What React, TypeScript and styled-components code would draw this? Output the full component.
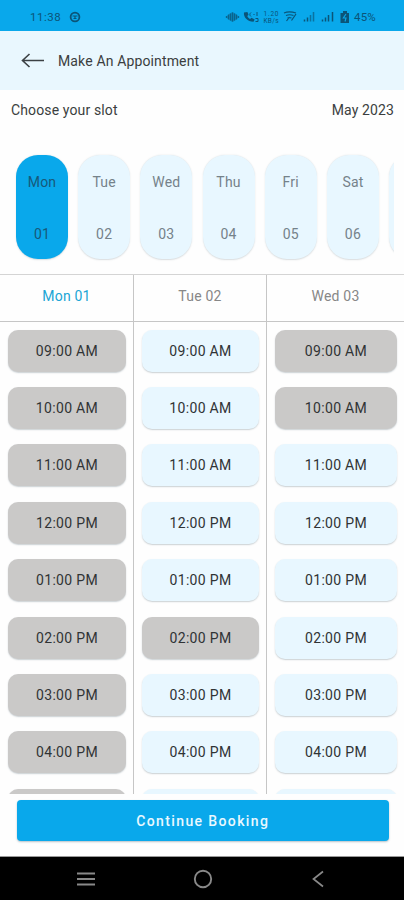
import React from 'react';
import styled, { createGlobalStyle } from 'styled-components';

const GlobalStyle = createGlobalStyle`
  * { box-sizing: border-box; }
  body { margin: 0; background: #fff; }
  button { font: inherit; border: 0; padding: 0; background: none; }
`;

const Screen = styled.main`
  width: 404px;
  height: 900px;
  display: flex;
  flex-direction: column;
  overflow: hidden;
  background: #fefefe;
  color: #3b3e40;
  font-family: Roboto, sans-serif;
  font-size: 14px;
`;

const StatusBar = styled.div`
  flex: 0 0 31px;
  display: flex;
  justify-content: space-between;
  align-items: center;
  padding: 2px 26px 0 30px;
  background: #09a8eb;
  color: #0b5478;
  font-size: 11.5px;
`;

const StatusGroup = styled.div`
  display: flex;
  align-items: center;
`;

const Clock = styled.span`
  width: 39px;
  letter-spacing: 0.5px;
`;

const Percent = styled.span`
  width: 24px;
  margin-left: 3px;
  letter-spacing: 0.2px;
  white-space: nowrap;
`;

const Header = styled.header`
  flex: 0 0 59px;
  display: flex;
  align-items: center;
  padding: 1px 0 0 20px;
  gap: 13px;
  background: #e9f7fe;
`;

const BackButton = styled.button`
  display: flex;
  width: 25px;
`;

const Title = styled.h1`
  margin: 0;
  font-size: 14px;
  font-weight: 400;
  letter-spacing: 0.14px;
`;

const MonthRow = styled.div`
  flex: 0 0 40px;
  display: flex;
  justify-content: space-between;
  align-items: center;
  padding: 0 10px 0 11px;
  letter-spacing: 0.13px;
`;

const DayStrip = styled.div`
  flex: 0 0 144px;
  display: flex;
  gap: 10.2px;
  padding: 25px 0 0 16px;
  margin-right: 10px;
  overflow: hidden;
`;

const DayPill = styled.button<{ $active: boolean }>`
  flex: 0 0 52px;
  height: 104px;
  display: flex;
  flex-direction: column;
  justify-content: space-between;
  align-items: center;
  padding: 18px 0 16px;
  border-radius: 22px;
  background: ${(p) => (p.$active ? '#09a8eb' : '#e8f7ff')};
  color: ${(p) => (p.$active ? '#17597a' : '#75828a')};
  box-shadow: 0 0.5px 1.5px rgba(80, 100, 110, 0.22);
  line-height: 18px;
  letter-spacing: 0.2px;
`;

const Schedule = styled.section`
  flex: 0 0 520px;
  display: grid;
  grid-template-columns: 134px 133px 137px;
  border-top: 1px solid #d4d4d4;
  overflow: hidden;
`;

const DayColumn = styled.div`
  border-right: 1px solid #c6c6c6;
  &:last-child { border-right: 0; }
`;

const ColumnHeading = styled.h2<{ $active: boolean }>`
  height: 47px;
  margin: 0;
  padding-top: 12px;
  border-bottom: 1px solid #c6c6c6;
  color: ${(p) => (p.$active ? '#20a5d5' : '#878787')};
  font-size: 14px;
  font-weight: 400;
  line-height: 18px;
  letter-spacing: 0.2px;
  text-align: center;
`;

const SlotList = styled.div`
  display: flex;
  flex-direction: column;
  gap: 15.4px;
  padding: 7.6px 7px 0 8px;
`;

const Slot = styled.button<{ $taken: boolean }>`
  height: 42px;
  flex: none;
  border-radius: 10px;
  background: ${(p) => (p.$taken ? '#cac9c8' : '#e8f7ff')};
  color: #303335;
  box-shadow: 0 1px 1.5px rgba(70, 90, 100, 0.28);
  letter-spacing: 0.32px;
`;

const Footer = styled.footer`
  flex: 0 0 63px;
  padding: 6px 15.5px 0 17px;
  border-bottom: 1px solid #999;
`;

const ContinueButton = styled.button`
  width: 100%;
  height: 41px;
  border-radius: 4px;
  background: #09a8eb;
  color: #e9f8ff;
  box-shadow: 0 1px 2px rgba(50, 80, 100, 0.35);
  font-size: 14px;
  font-weight: 500;
  letter-spacing: 1.38px;
`;

const NavBar = styled.nav`
  flex: 1;
  display: grid;
  grid-template-columns: 86px 117px 115px;
  align-items: center;
  background: #000;
  svg { justify-self: end; margin-right: -11px; }
`;

const days = ['Mon', 'Tue', 'Wed', 'Thu', 'Fri', 'Sat', 'Sun'];
const times = ['09:00 AM', '10:00 AM', '11:00 AM', '12:00 PM', '01:00 PM', '02:00 PM', '03:00 PM', '04:00 PM', '05:00 PM'];
const columns = [
  { name: 'Mon 01', taken: times },
  { name: 'Tue 02', taken: ['02:00 PM'] },
  { name: 'Wed 03', taken: ['09:00 AM', '10:00 AM'] },
];

const BadgeIcon = () => (
  <svg width="12" height="12" viewBox="0 0 12 12" fill="none" stroke="currentColor">
    <circle cx="6" cy="6" r="4.4" strokeWidth="1.8" />
    <path d="M3.5 5h5M4.5 7.5h3M6 5v3" strokeWidth="1.2" />
  </svg>
);

const StatusIcons = () => (
  <svg width="126" height="16" viewBox="0 0 126 16" fill="none" stroke="currentColor">
    <path d="M.5 8 5 4.5 7.5 3l2.5 1.5L14.5 8 10 11.5 7.5 13 5 11.5z" fill="currentColor" stroke="none" opacity=".4" />
    <path d="M1.5 7v2M3.5 5.5v5M5.5 4.5v7M7.5 3.5v9M9.5 4.5v7M11.5 5.5v5M13.5 7v2" strokeWidth="1.2" opacity=".7" />
    <path d="M19 3.5c-.8 4.5 3.5 9.3 9.5 9.3l1.2-2.4-3.2-1.6-1.4 1.2c-1.3-.7-2.3-1.8-2.8-3.1l1.2-1.2-1.1-2.7z" fill="currentColor" stroke="none" />
    <path d="M26 3.5c-1.5 1-1.5 3 0 4M28.5 5.5h1M32 3v4M30.5 9.5h2.5v3h-2.5" />
    <g fill="currentColor" stroke="none" fontFamily="Roboto, sans-serif" fontSize="6.5">
      <text x="38.5" y="7.3" textLength="15">1.20</text>
      <text x="38.5" y="14" textLength="15">KB/s</text>
    </g>
    <path d="M59 4c3-1.4 8-1.4 12 0M61 6.5c2.5-1 5-1 7.5 0M62.5 9c1.3-.6 2.5-.6 4 0M61.5 12l3-4M66.5 11.5l4.5-6.5" strokeWidth="1.2" />
    <g strokeWidth="1.5">
      <path d="M79.5 10.5v2M82.5 8.5v4" /><path d="M85.5 6v6.5M88.5 3v9.5" opacity=".65" />
      <path d="M97.5 10.5v2M100.5 8.5v4M103.5 6v6.5M107.5 3v9.5" />
    </g>
    <path d="M115.5 4h2.5V2h4v2h2v10h-8.5z" fill="currentColor" stroke="none" />
    <path d="M121 5l-2.7 4H121l-1 3.5" stroke="#09a8eb" strokeWidth="1.1" />
  </svg>
);

export default function App() {
  return (
    <>
      <GlobalStyle />
      <Screen>
        <StatusBar>
          <StatusGroup><Clock>11:38</Clock><BadgeIcon /></StatusGroup>
          <StatusGroup><StatusIcons /><Percent>45%</Percent></StatusGroup>
        </StatusBar>
        <Header>
          <BackButton aria-label="Back">
            <svg width="25" height="18" viewBox="0 0 25 18" fill="none" stroke="#3c4144" strokeWidth="1.6">
              <path d="M24 8.5H2.5M9.5 2 2.5 8.5l7 6.5" />
            </svg>
          </BackButton>
          <Title>Make An Appointment</Title>
        </Header>
        <MonthRow><span>Choose your slot</span><span>May 2023</span></MonthRow>
        <DayStrip>
          {days.map((day, i) => (
            <DayPill key={day} $active={i === 0}><span>{day}</span><span>{`0${i + 1}`}</span></DayPill>
          ))}
        </DayStrip>
        <Schedule>
          {columns.map((column, i) => (
            <DayColumn key={column.name}>
              <ColumnHeading $active={i === 0}>{column.name}</ColumnHeading>
              <SlotList>
                {times.map((time) => (
                  <Slot key={time} $taken={column.taken.includes(time)}>{time}</Slot>
                ))}
              </SlotList>
            </DayColumn>
          ))}
        </Schedule>
        <Footer><ContinueButton>Continue Booking</ContinueButton></Footer>
        <NavBar>
          <svg width="22" height="18" viewBox="0 0 22 18" stroke="#898989" strokeWidth="1.9"><path d="M2 3.5h18M2 9h18M2 14.5h18" /></svg>
          <svg width="22" height="20" viewBox="0 0 22 20" fill="none" stroke="#898989" strokeWidth="1.9"><circle cx="11" cy="10" r="8.2" /></svg>
          <svg width="22" height="20" viewBox="0 0 22 20" fill="none" stroke="#898989" strokeWidth="1.7"><path d="m16 2.5-9.5 7.5 9.5 7.5" /></svg>
        </NavBar>
      </Screen>
    </>
  );
}
